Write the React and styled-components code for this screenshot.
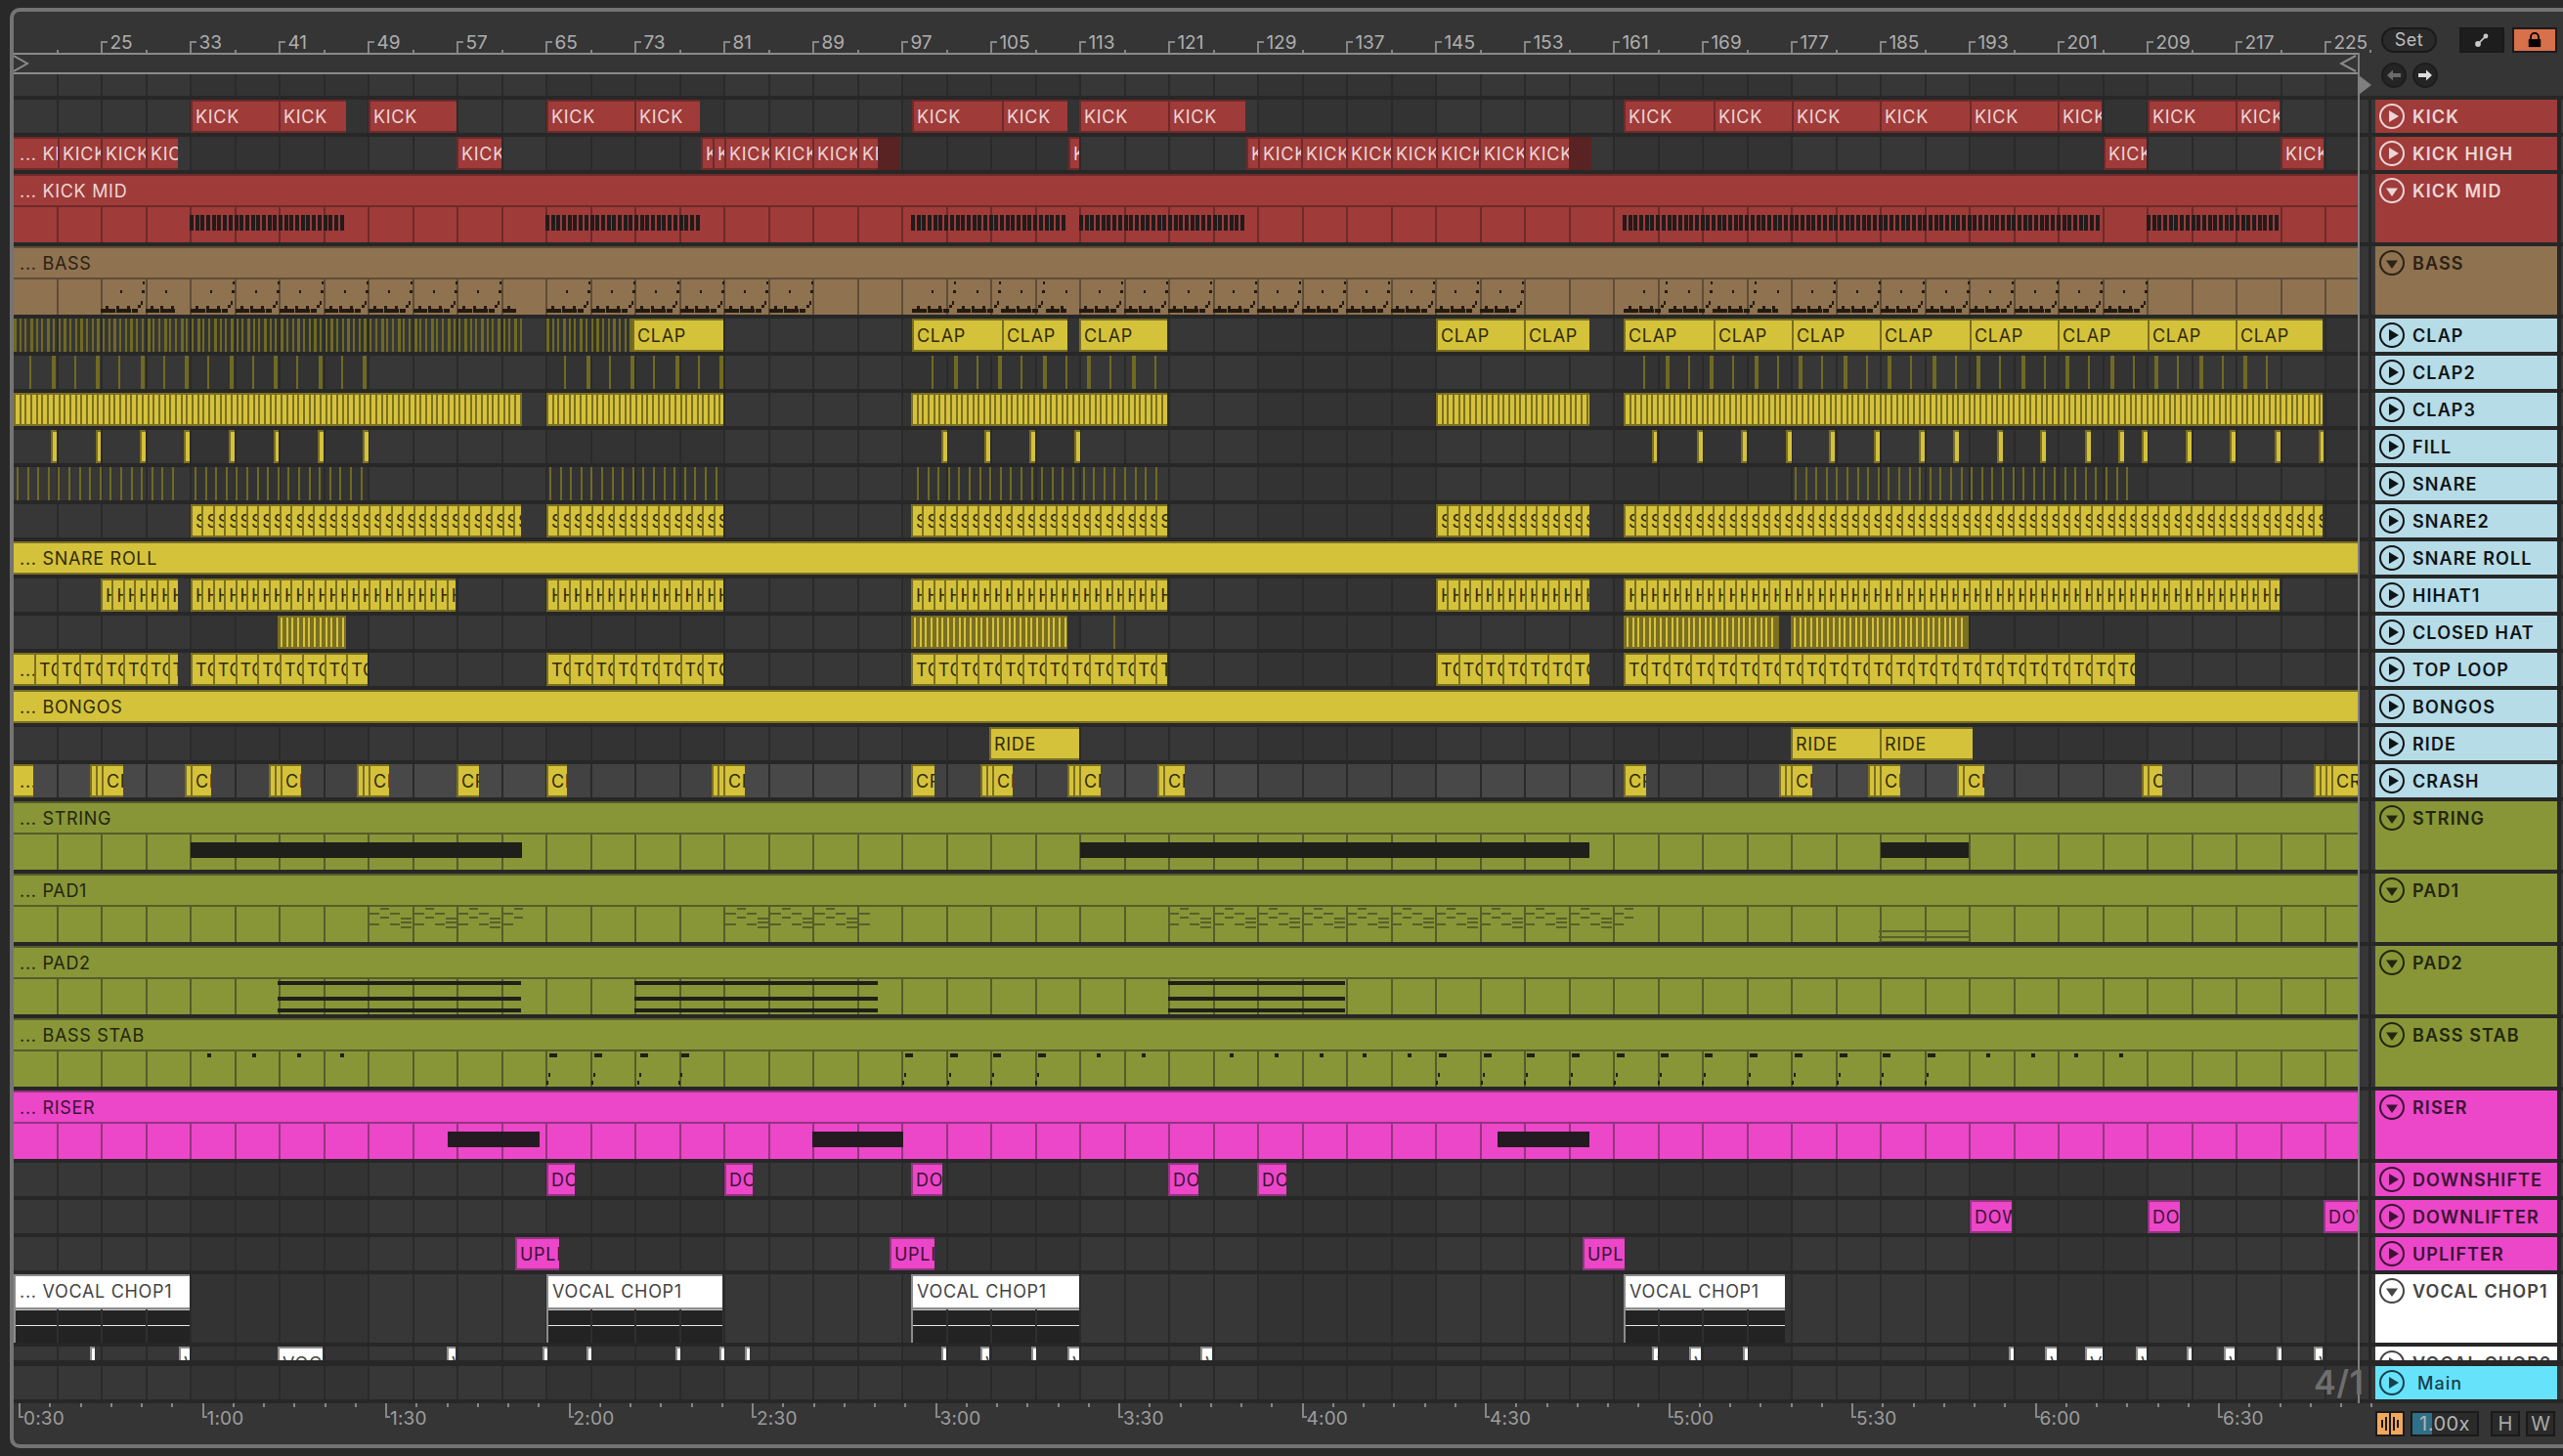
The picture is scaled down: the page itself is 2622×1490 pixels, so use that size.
import React from "react";
import styled, { createGlobalStyle } from "styled-components";

const TONES = {
  red: { fill: "#9f3b39", edge: "#6e2a2a", ink: "#ecd6d6" },
  redDim: { fill: "#5a2323", edge: "#5a2323", ink: "#ecd6d6" },
  tan: { fill: "#8f7250", edge: "#5e4d37", ink: "#2b2114" },
  yellow: { fill: "#d5c23b", edge: "#7a6f22", ink: "#302c08" },
  olive: { fill: "#889638", edge: "#565c2a", ink: "#23260f" },
  pink: { fill: "#ec46c9", edge: "#93357f", ink: "#3a1433" },
  white: { fill: "#ffffff", edge: "#8c8c8c", ink: "#444444" },
  sky: { fill: "#b6dce8", edge: "#7da0aa", ink: "#101416" },
  cyan: { fill: "#66e3fb", edge: "#66e3fb", ink: "#17404c" },
  dark: { fill: "#7a6f22", edge: "#7a6f22", ink: "#302c08" },
};

const LANE_X = 14;
const BAR_ZERO = 103.4;
const STEP = 45.5;

const laneGradient = (line) => {
  const offset = (BAR_ZERO - LANE_X) % STEP;
  return `repeating-linear-gradient(90deg, ${line} ${offset - STEP}px, ${line} ${offset - STEP + 2}px, transparent ${
    offset - STEP + 2
  }px, transparent ${offset}px)`;
};

const GlobalStyle = createGlobalStyle`
  html, body {
    margin: 0;
    background: #292929;
    overflow: hidden;
  }
  body {
    font-family: Inter, "Liberation Sans", sans-serif;
  }
`;

const Frame = styled.div`
  position: relative;
  box-sizing: border-box;
  margin: 8px 0 0 10px;
  width: 2612px;
  height: 1474px;
  border: 4px solid #747474;
  border-right: none;
  border-radius: 10px 0 0 10px;
  background: #353535;
  display: flex;
  flex-direction: column;
  overflow: hidden;
`;

const TopArea = styled.div`
  display: flex;
  height: 86px;
  margin-bottom: 4px;
`;

const TimeColumn = styled.div`
  width: 2416px;
  display: flex;
  flex-direction: column;
`;

const Ruler = styled.div`
  position: relative;
  height: 42px;
  flex: none;
`;

const BarTick = styled.span`
  position: absolute;
  bottom: 0;
  width: 7px;
  height: 12px;
  border-left: 2px solid #858585;
  border-top: 2px solid #858585;
  box-sizing: border-box;
`;

const HalfTick = styled.span`
  position: absolute;
  bottom: 0;
  width: 2px;
  height: 3px;
  background: #858585;
`;

const BarLabel = styled.span`
  position: absolute;
  top: 22px;
  font-size: 19px;
  line-height: 20px;
  color: #aeaeae;
`;

const LoopBar = styled.div`
  position: relative;
  box-sizing: border-box;
  flex: none;
  width: 2400px;
  height: 22px;
  border: 2px solid #8a8a8a;
  border-left: none;
`;

const LoopMark = styled.svg`
  position: absolute;
  top: 0;
  ${(p) => (p.$end ? "right: 1px;" : "left: 0;")}
`;

const EmptyLane = styled.div`
  flex: 1;
  width: 2398px;
  background-image: ${laneGradient("#2a2a2a")},
    repeating-linear-gradient(90deg, #373737 -1px, #373737 181px, #333333 181px, #333333 363px);
`;

const SideTools = styled.div`
  position: relative;
  flex: 1;
  padding: 16px 0 0 6px;
  display: flex;
  flex-direction: column;
  gap: 10px;
`;

const ToolRow = styled.div`
  display: flex;
  align-items: center;
`;

const SetPill = styled.div`
  box-sizing: border-box;
  width: 57px;
  height: 26px;
  border-radius: 13px;
  border: 2px solid #1a1a1a;
  background: #2a2a2a;
  color: #bdbdbd;
  font-size: 18px;
  line-height: 22px;
  letter-spacing: 0.6px;
  text-align: center;
`;

const SquareTool = styled.div`
  box-sizing: border-box;
  width: 46px;
  height: 26px;
  margin-left: ${(p) => p.$gap}px;
  border: 2px solid #1a1a1a;
  background: ${(p) => p.$bg};
  display: flex;
  align-items: center;
  justify-content: center;
`;

const RoundTool = styled.div`
  box-sizing: border-box;
  width: 26px;
  height: 26px;
  margin-right: 6px;
  border-radius: 50%;
  background: #242424;
  border: 2px solid #1d1d1d;
  display: flex;
  align-items: center;
  justify-content: center;
`;

const Tracks = styled.div`
  position: relative;
  flex: none;
  background: #272727;
  display: flex;
  flex-direction: column;
  gap: 4px;
  margin-top: -4px;
  padding-top: 4px;
`;

const Row = styled.div`
  position: relative;
  display: flex;
  height: ${(p) => p.$h}px;
  flex: none;
`;

const Lane = styled.div`
  position: relative;
  width: 2398px;
  flex: none;
  display: flex;
  flex-direction: column;
  overflow: hidden;
  background-color: #363636;
  background-image: ${laneGradient("#2a2a2a")},
    repeating-linear-gradient(90deg, ${(p) => (p.$lit ? "#484848" : "#373737")} -1px, ${(p) =>
      p.$lit ? "#484848" : "#373737"} 181px, ${(p) => (p.$lit ? "#424242" : "#333333")} 181px, ${(p) =>
      p.$lit ? "#424242" : "#333333"} 363px);
`;

const Band = styled.div`
  box-sizing: border-box;
  height: 34px;
  flex: none;
  padding-left: 6px;
  border-top: 2px solid ${(p) => TONES[p.$tone].edge};
  border-bottom: 2px solid ${(p) => TONES[p.$tone].edge};
  background: ${(p) => TONES[p.$tone].fill};
  color: ${(p) => TONES[p.$tone].ink};
  font-size: 18px;
  line-height: 31px;
  letter-spacing: 0.7px;
  white-space: nowrap;
`;

const Body = styled.div`
  flex: 1;
  background-color: ${(p) => TONES[p.$tone].fill};
  background-image: ${(p) => laneGradient(TONES[p.$tone].edge)};
`;

const Clip = styled.div`
  position: absolute;
  top: 0;
  bottom: 0;
  box-sizing: border-box;
  overflow: hidden;
  padding-left: ${(p) => (p.$lead ? 6 : 3)}px;
  border-left: ${(p) => (p.$lead ? "none" : `2px solid ${TONES[p.$tone].edge}`)};
  border-top: 2px solid ${(p) => TONES[p.$tone].edge};
  border-bottom: ${(p) => (p.$open ? "none" : `2px solid ${TONES[p.$tone].edge}`)};
  background: ${(p) => TONES[p.$tone].fill};
  color: ${(p) => TONES[p.$tone].ink};
  font-size: 18px;
  line-height: 31px;
  letter-spacing: 0.7px;
  white-space: nowrap;
`;

const VocalClip = styled.div`
  position: absolute;
  top: 0;
  bottom: 0;
  box-sizing: border-box;
  border-left: 2px solid #8c8c8c;
  display: flex;
  flex-direction: column;
`;

const VocalHead = styled.div`
  box-sizing: border-box;
  height: 36px;
  flex: none;
  padding-left: 4px;
  border-top: 2px solid #8c8c8c;
  border-bottom: 2px solid #8c8c8c;
  background: #ffffff;
  color: #444444;
  font-size: 18px;
  line-height: 31px;
  letter-spacing: 0.7px;
  white-space: nowrap;
`;

const VocalWave = styled.div`
  position: relative;
  flex: 1;
  background: #232323;
  &::before {
    content: "";
    position: absolute;
    left: 0;
    right: 0;
    top: 16px;
    height: 1px;
    background: #e8e8e8;
  }
  &::after {
    content: "";
    position: absolute;
    left: 0;
    right: 0;
    top: 0;
    height: 1px;
    background: #c8c8c8;
  }
`;

const Roll = styled.svg`
  position: absolute;
  left: 0;
  top: 0;
  pointer-events: none;
`;

const Gutter = styled.div`
  width: 18px;
  flex: none;
  background: linear-gradient(90deg, #363636 11px, #272727 11px, #272727 14px, #363636 14px);
`;

const TrackHead = styled.div`
  box-sizing: border-box;
  width: 186px;
  flex: none;
  display: flex;
  align-items: flex-start;
  gap: ${(p) => (p.$main ? 13 : 8)}px;
  padding: 4px 0 0 4px;
  overflow: hidden;
  background: ${(p) => TONES[p.$tone].fill};
  color: ${(p) => TONES[p.$tone].ink};
`;

const TrackName = styled.span`
  font-size: 18px;
  line-height: 27px;
  font-weight: ${(p) => (p.$main ? 500 : 600)};
  letter-spacing: ${(p) => (p.$main ? 1 : 1.1)}px;
  white-space: nowrap;
`;

const RightEdge = styled.div`
  width: 2px;
  margin-left: 4px;
  flex: none;
  background: #3a3a3a;
`;

const EndLine = styled.div`
  position: absolute;
  left: 2398px;
  top: 42px;
  width: 2px;
  height: 1382px;
  background: #7f7f7f;
  z-index: 3;
`;

const EndFlag = styled.svg`
  position: absolute;
  left: 2399px;
  top: 65px;
  z-index: 3;
`;

const GridLabel = styled.span`
  position: absolute;
  left: 2353px;
  top: 0;
  font-size: 34px;
  line-height: 34px;
  font-weight: 600;
  letter-spacing: 0.5px;
  color: #6e6e6e;
  z-index: 4;
`;

const MainRowSpacer = styled.div`
  height: 6px;
  flex: none;
  background: #272727;
`;

const MainRowFoot = styled.div`
  height: 4px;
  flex: none;
  background: #272727;
`;

const BottomBar = styled.div`
  display: flex;
  flex: 1;
`;

const TimeRuler = styled.div`
  position: relative;
  width: 2416px;
  flex: none;
`;

const MinorTick = styled.span`
  position: absolute;
  top: 0;
  width: 2px;
  height: 4px;
  background: #868686;
`;

const MajorTick = styled.span`
  position: absolute;
  top: 0;
  width: 5px;
  height: 15px;
  box-sizing: border-box;
  border-left: 2px solid #868686;
  border-bottom: 2px solid #868686;
`;

const TimeLabel = styled.span`
  position: absolute;
  top: 6px;
  font-size: 19px;
  line-height: 20px;
  letter-spacing: 0.2px;
  color: #9d9d9d;
`;

const BottomTools = styled.div`
  flex: 1;
  display: flex;
  align-items: flex-start;
  padding-top: 8px;
`;

const WaveButton = styled.div`
  box-sizing: border-box;
  width: 30px;
  height: 26px;
  border: 2px solid #1a1a1a;
  background: #f2a85c;
  display: flex;
  align-items: center;
  justify-content: center;
`;

const ZoomField = styled.div`
  position: relative;
  box-sizing: border-box;
  width: 70px;
  height: 26px;
  margin-left: 6px;
  border: 2px solid #1a1a1a;
  background: #2a2a2a;
  color: #b4b4b4;
  font-size: 20px;
  line-height: 22px;
  letter-spacing: 0.5px;
  padding-left: 7px;
  white-space: nowrap;
  &::before {
    content: "";
    position: absolute;
    left: 0;
    top: 0;
    bottom: 0;
    width: 20px;
    background: #2f6f87;
  }
`;

const ZoomText = styled.span`
  position: relative;
`;

const KeyButton = styled.div`
  box-sizing: border-box;
  width: 30px;
  height: 26px;
  margin-left: ${(p) => p.$gap}px;
  border: 2px solid #1a1a1a;
  background: #2a2a2a;
  color: #a8a8a8;
  font-size: 20px;
  line-height: 22px;
  text-align: center;
`;

// builders for the clip and note data
const clip = (a, b, label, tone) => ({ a, b, label, tone });

const chain = (edges, label) =>
  edges.slice(0, -1).map((a, i) => clip(a, edges[i + 1], label));

const cells = (ranges, pitch, label) => {
  const out = [];
  ranges.forEach(([a, b]) => {
    for (let x = a; x < b - 1; x += pitch) out.push(clip(x, Math.min(x + pitch, b), label));
  });
  return out;
};

const crash = (a, b, slices) => {
  const out = [];
  for (let i = 0; i < slices; i++) out.push(clip(a + i * 6, a + (i + 1) * 6));
  out.push(clip(a + slices * 6, b, "CRASH"));
  return out;
};

const stripes = (ranges, pitch, width, y, h) => {
  const out = [];
  ranges.forEach(([a, b]) => {
    let i = 0;
    for (let x = a; x < b - 1; x += pitch) {
      out.push([x, y, typeof width === "function" ? width(i) : width, h]);
      i++;
    }
  });
  return out;
};

const solid = (ranges, ys, h) =>
  ranges.flatMap(([a, b]) => ys.map((y) => [a, y, b - a, h]));

// bar lines that show through the dark body of a vocal clip
const barLines = (ranges, y, h) => {
  const out = [];
  ranges.forEach(([a, b]) => {
    for (let x = BAR_ZERO - 2 * STEP; x < b - 2; x += STEP) {
      if (x > a + 4) out.push([x, y, 2, h]);
    }
  });
  return out;
};

const BASS_RANGES = [
  [103, 184],
  [195, 533],
  [559, 831],
  [933, 1092],
  [1104, 1559],
  [1661, 1820],
  [1833, 2196],
];

const bassNotes = () => {
  const out = [];
  BASS_RANGES.forEach(([a, b]) => {
    for (let x = a; x < b - 8; x += STEP) {
      const room = b - x;
      if (room > 22) out.push([x + 20, 45, 2, 3]);
      if (room > 44) {
        out.push([x + 43, 36, 2, 3], [x + 42, 45, 3, 3], [x + 38, 60, 3, 3], [x + 41, 56, 2, 4]);
      }
      for (let i = 0; i < 7 && i * 5.3 < room - 4; i++) {
        out.push([x + i * 5.3, 64, i % 3 === 2 ? 4 : 6, 4]);
        if (i % 2) out.push([x + i * 5.3, 61, 3, 3]);
      }
    }
  });
  return out;
};

const PAD_DASHES = [
  [12, 35, 9],
  [0, 40, 11],
  [22, 40, 10],
  [12, 44, 9],
  [33, 45, 11],
  [33, 49, 11],
  [0, 51, 11],
  [22, 51, 10],
  [33, 54, 11],
];

const padNotes = () => {
  const out = [];
  [
    [377, 534],
    [742, 898],
    [1195, 1672],
  ].forEach(([a, b]) => {
    for (let x = a; x < b; x += STEP) {
      PAD_DASHES.forEach(([dx, y, w]) => {
        if (x + dx + w < b + 1) out.push([x + dx, y, w, 2]);
      });
    }
  });
  [58, 64, 69].forEach((y) => out.push([1922, y, 92, 2]));
  return out;
};

const stabNotes = () => {
  const small = [214, 260, 306, 350, 1124, 1170, 1260, 1306, 1352, 1396, 1442, 2034, 2080, 2124, 2170];
  const wide = [566, 612, 659, 701, 930, 976, 1020, 1066, 1476, 1522, 1566, 1612, 1658, 1703, 1748, 1794, 1840, 1886, 1930, 1976];
  const out = small.map((x) => [x - 2, 36, 4, 4]);
  wide.forEach((x) => {
    out.push([x - 4, 36, 8, 4], [x - 5, 56, 2, 4], [x - 7, 64, 2, 4]);
  });
  return out;
};

const DARK = "#211b1b";
const OLIVE_LINE = "#6f6a22";

const CLAP_CHAIN = [
  ...chain([647, 740], "CLAP"),
  ...chain([933, 1025, 1092], "CLAP"),
  clip(1104, 1194, "CLAP"),
  ...chain([1469, 1559, 1626], "CLAP"),
  ...chain([1661, 1753, 1833, 1923, 2015, 2105, 2197, 2287, 2376], "CLAP"),
];

const VOCAL_CLIPS = [
  { a: 14, b: 194, label: "... VOCAL CHOP1" },
  { a: 559, b: 739, label: "VOCAL CHOP1" },
  { a: 932, b: 1104, label: "VOCAL CHOP1" },
  { a: 1661, b: 1826, label: "VOCAL CHOP1" },
];

const TRACKS = [
  {
    name: "KICK",
    tone: "red",
    h: 34,
    clips: [
      ...chain([195, 285, 354], "KICK"),
      clip(377, 467, "KICK"),
      ...chain([559, 649, 716], "KICK"),
      ...chain([933, 1025, 1092], "KICK"),
      ...chain([1104, 1195, 1274], "KICK"),
      ...chain([1661, 1753, 1833, 1923, 2015, 2105, 2150], "KICK"),
      ...chain([2197, 2287, 2332], "KICK"),
    ],
  },
  {
    name: "KICK HIGH",
    tone: "red",
    h: 34,
    clips: [
      clip(14, 59, "... KICK"),
      ...chain([59, 103, 149, 182], "KICK"),
      clip(467, 513, "KICK"),
      ...chain([717, 729, 741, 787, 831, 877, 898], "KICK"),
      clip(898, 921, "", "redDim"),
      clip(1093, 1104, "KICK"),
      ...chain([1275, 1287, 1331, 1377, 1423, 1469, 1513, 1559, 1605], "KICK"),
      clip(1605, 1628, "", "redDim"),
      clip(2152, 2196, "KICK"),
      clip(2333, 2377, "KICK"),
    ],
  },
  {
    name: "KICK MID",
    tone: "red",
    h: 70,
    band: "... KICK MID",
    open: true,
    rolls: [
      {
        fill: DARK,
        rects: stripes(
          [
            [194, 352],
            [558, 716],
            [932, 1092],
            [1104, 1274],
            [1660, 2149],
            [2196, 2331],
          ],
          5.69,
          4,
          42,
          16
        ),
      },
    ],
  },
  {
    name: "BASS",
    tone: "tan",
    h: 70,
    band: "... BASS",
    open: true,
    rolls: [{ fill: "#241a10", rects: bassNotes() }],
  },
  {
    name: "CLAP",
    tone: "yellow",
    head: "sky",
    h: 34,
    clips: CLAP_CHAIN,
    rolls: [
      {
        fill: OLIVE_LINE,
        rects: stripes(
          [
            [14, 533],
            [559, 647],
          ],
          5.69,
          (i) => (i % 3 === 0 ? 3 : 2),
          0,
          34
        ),
      },
    ],
  },
  {
    name: "CLAP2",
    tone: "yellow",
    head: "sky",
    h: 34,
    rolls: [
      {
        fill: OLIVE_LINE,
        rects: stripes(
          [
            [30, 376],
            [577, 740],
            [953, 1194],
            [1681, 2320],
          ],
          22.75,
          (i) => (i % 2 ? 4 : 2),
          0,
          34
        ),
      },
    ],
  },
  {
    name: "CLAP3",
    tone: "yellow",
    head: "sky",
    h: 34,
    clips: [clip(14, 533), clip(559, 740), clip(932, 1194), clip(1469, 1626), clip(1661, 2376)],
    rolls: [
      {
        fill: "#7a6f22",
        rects: stripes(
          [
            [14, 533],
            [559, 740],
            [932, 1194],
            [1469, 1626],
            [1661, 2376],
          ],
          5.69,
          2,
          0,
          34
        ),
      },
    ],
  },
  {
    name: "FILL",
    tone: "yellow",
    head: "sky",
    h: 34,
    clips: [
      ...[
        [52, 6],
        [98, 4],
        [143, 6],
        [188, 6],
        [234, 6],
        [280, 4],
        [325, 6],
        [371, 6],
        [963, 6],
        [1007, 6],
        [1053, 6],
        [1099, 6],
        [1690, 4],
        [1736, 6],
        [1781, 6],
        [1827, 6],
        [1871, 6],
        [1917, 6],
        [1963, 6],
        [1998, 6],
        [2043, 6],
        [2087, 6],
        [2133, 6],
        [2167, 6],
        [2191, 6],
        [2236, 6],
        [2281, 6],
        [2327, 6],
        [2372, 5],
      ].map(([x, w]) => clip(x, x + w)),
    ],
  },
  {
    name: "SNARE",
    tone: "yellow",
    head: "sky",
    h: 34,
    rolls: [
      {
        fill: OLIVE_LINE,
        rects: stripes(
          [
            [17, 178],
            [199, 373],
            [562, 736],
            [938, 1192],
            [1836, 2180],
          ],
          10.6,
          2,
          0,
          34
        ),
      },
    ],
  },
  {
    name: "SNARE2",
    tone: "yellow",
    head: "sky",
    h: 34,
    clips: cells(
      [
        [195, 533],
        [559, 740],
        [932, 1194],
        [1469, 1626],
        [1661, 2376],
      ],
      11.375,
      "SNARE2"
    ),
  },
  { name: "SNARE ROLL", tone: "yellow", head: "sky", h: 34, band: "... SNARE ROLL" },
  {
    name: "HIHAT1",
    tone: "yellow",
    head: "sky",
    h: 34,
    clips: cells(
      [
        [103, 182],
        [195, 466],
        [559, 740],
        [932, 1194],
        [1469, 1626],
        [1661, 2332],
      ],
      11.375,
      "HIHAT1"
    ),
  },
  {
    name: "CLOSED HAT",
    tone: "yellow",
    head: "sky",
    h: 34,
    clips: [
      clip(284, 354, "", "dark"),
      clip(932, 1092, "", "dark"),
      clip(1661, 1820, "", "dark"),
      clip(1832, 2014, "", "dark"),
    ],
    rolls: [
      {
        fill: "#d5c23b",
        rects: stripes(
          [
            [287, 352],
            [935, 1090],
            [1664, 1818],
            [1835, 2012],
          ],
          5.69,
          2,
          2,
          30
        ),
      },
      { fill: OLIVE_LINE, rects: [[1139, 0, 2, 34]] },
    ],
  },
  {
    name: "TOP LOOP",
    tone: "yellow",
    head: "sky",
    h: 34,
    clips: [
      clip(14, 35, "..."),
      ...cells(
        [
          [35, 182],
          [195, 376],
          [559, 740],
          [932, 1194],
          [1469, 1626],
          [1661, 2184],
        ],
        22.75,
        "TOP LOOP"
      ),
    ],
  },
  { name: "BONGOS", tone: "yellow", head: "sky", h: 34, band: "... BONGOS" },
  {
    name: "RIDE",
    tone: "yellow",
    head: "sky",
    h: 34,
    clips: [clip(1012, 1104, "RIDE"), clip(1832, 1923, "RIDE"), clip(1923, 2018, "RIDE")],
  },
  {
    name: "CRASH",
    tone: "yellow",
    head: "sky",
    h: 34,
    lit: true,
    clips: [
      clip(14, 34, "..."),
      ...crash(92, 126, 2),
      ...crash(189, 216, 1),
      ...crash(275, 308, 2),
      ...crash(365, 398, 2),
      ...crash(467, 490, 0),
      ...crash(559, 580, 0),
      ...crash(728, 762, 2),
      ...crash(932, 956, 0),
      ...crash(1003, 1036, 2),
      ...crash(1092, 1126, 2),
      ...crash(1184, 1212, 1),
      ...crash(1661, 1684, 0),
      ...crash(1820, 1854, 2),
      ...crash(1911, 1944, 2),
      ...crash(2002, 2030, 1),
      ...crash(2191, 2212, 1),
      ...crash(2367, 2412, 3),
    ],
  },
  {
    name: "STRING",
    tone: "olive",
    h: 70,
    band: "... STRING",
    open: true,
    rolls: [
      {
        fill: "#1f201a",
        rects: solid(
          [
            [195, 534],
            [1105, 1626],
            [1924, 2014],
          ],
          [42],
          16
        ),
      },
    ],
  },
  {
    name: "PAD1",
    tone: "olive",
    h: 70,
    band: "... PAD1",
    open: true,
    rolls: [{ fill: "#5a5f29", rects: padNotes() }],
  },
  {
    name: "PAD2",
    tone: "olive",
    h: 70,
    band: "... PAD2",
    open: true,
    rolls: [
      {
        fill: "#1f201a",
        rects: solid(
          [
            [284, 533],
            [649, 898],
            [1195, 1376],
          ],
          [36, 52, 64],
          4
        ),
      },
    ],
  },
  {
    name: "BASS STAB",
    tone: "olive",
    h: 70,
    band: "... BASS STAB",
    open: true,
    rolls: [{ fill: "#1f201a", rects: stabNotes() }],
  },
  {
    name: "RISER",
    tone: "pink",
    h: 70,
    band: "... RISER",
    open: true,
    rolls: [
      {
        fill: "#241a22",
        rects: solid(
          [
            [458, 552],
            [831, 924],
            [1532, 1626],
          ],
          [42],
          16
        ),
      },
    ],
  },
  {
    name: "DOWNSHIFTE",
    tone: "pink",
    h: 34,
    clips: [
      clip(559, 588, "DOWNSHIFTER"),
      clip(741, 770, "DOWNSHIFTER"),
      clip(932, 964, "DOWNSHIFTER"),
      clip(1195, 1226, "DOWNSHIFTER"),
      clip(1286, 1316, "DOWNSHIFTER"),
    ],
  },
  {
    name: "DOWNLIFTER",
    tone: "pink",
    h: 34,
    clips: [clip(2015, 2058, "DOWNLIFTER"), clip(2197, 2230, "DOWNLIFTER"), clip(2377, 2412, "DOWNLIFTER")],
  },
  {
    name: "UPLIFTER",
    tone: "pink",
    h: 34,
    clips: [clip(527, 572, "UPLIFTER"), clip(910, 956, "UPLIFTER"), clip(1619, 1662, "UPLIFTER")],
  },
  {
    name: "VOCAL CHOP1",
    tone: "white",
    h: 70,
    open: true,
    vocals: VOCAL_CLIPS,
    rolls: [
      {
        fill: "#2f2f2f",
        rects: barLines(
          VOCAL_CLIPS.map((c) => [c.a, c.b]),
          36,
          34
        ),
      },
    ],
  },
  {
    name: "VOCAL CHOP2",
    tone: "white",
    h: 14,
    open: false,
    cut: true,
    clips: [
      [92, 96],
      [183, 194],
      [284, 330],
      [457, 466],
      [555, 558],
      [600, 604],
      [691, 694],
      [736, 740],
      [762, 766],
      [963, 968],
      [1003, 1012],
      [1055, 1058],
      [1092, 1104],
      [1228, 1240],
      [1690, 1696],
      [1728, 1740],
      [1783, 1786],
      [2055, 2060],
      [2092, 2104],
      [2133, 2151],
      [2185, 2196],
      [2237, 2242],
      [2275, 2286],
      [2329, 2332],
      [2367, 2376],
    ].map(([a, b]) => clip(a, b, "VOCAL CHOP2")),
  },
];

const laneStyle = (a, b) => ({ left: a - LANE_X, width: b - a });

const FoldIcon = ({ open, color }) => (
  <svg width="26" height="26" viewBox="0 0 26 26" style={{ flex: "none" }}>
    <circle cx="13" cy="13" r="12" fill="none" stroke={color} strokeWidth="2" />
    {open ? <polygon points="7,10.5 19,10.5 13,19" fill={color} /> : <polygon points="10,7 20,13 10,19" fill={color} />}
  </svg>
);

const Track = ({ track }) => {
  const head = track.head || track.tone;
  return (
    <Row $h={track.h}>
      <Lane $lit={track.lit}>
        {track.band && (
          <>
            <Band $tone={track.tone}>{track.band}</Band>
            <Body $tone={track.tone} />
          </>
        )}
        {(track.clips || []).map((c, i) => (
          <Clip
            key={i}
            $tone={c.tone || track.tone}
            $open={track.cut}
            $lead={c.a === LANE_X && c.label}
            style={laneStyle(c.a, c.b)}
          >
            {c.label}
          </Clip>
        ))}
        {(track.vocals || []).map((c, i) => (
          <VocalClip key={i} style={laneStyle(c.a, c.b)}>
            <VocalHead>{c.label}</VocalHead>
            <VocalWave />
          </VocalClip>
        ))}
        {(track.rolls || []).map((roll, i) => (
          <Roll key={i} width="2398" height={track.h} shapeRendering="crispEdges">
            {roll.rects.map(([x, y, w, h], j) => (
              <rect key={j} x={x - LANE_X} y={y} width={w} height={h} fill={roll.fill} />
            ))}
          </Roll>
        ))}
      </Lane>
      <Gutter />
      <TrackHead $tone={head}>
        <FoldIcon open={track.open} color={TONES[head].ink} />
        <TrackName>{track.name}</TrackName>
      </TrackHead>
      <RightEdge />
    </Row>
  );
};

const BARS = Array.from({ length: 26 }, (_, i) => 25 + i * 8);
const TIMES = ["0:30", "1:00", "1:30", "2:00", "2:30", "3:00", "3:30", "4:00", "4:30", "5:00", "5:30", "6:00", "6:30"];

const App = () => (
  <>
    <GlobalStyle />
    <Frame>
      <TopArea>
        <TimeColumn>
          <Ruler>
            {BARS.map((bar, i) => {
              const x = BAR_ZERO + i * 91 - LANE_X;
              return (
                <React.Fragment key={bar}>
                  <BarTick style={{ left: x }} />
                  <BarLabel style={{ left: x + 9 }}>{bar}</BarLabel>
                  <HalfTick style={{ left: x - STEP }} />
                </React.Fragment>
              );
            })}
            <HalfTick style={{ left: BAR_ZERO + 25 * 91 - LANE_X + STEP }} />
          </Ruler>
          <LoopBar>
            <LoopMark width="16" height="18" viewBox="0 0 16 18">
              <polyline points="0,1 14,9 0,17" fill="none" stroke="#8a8a8a" strokeWidth="2" />
            </LoopMark>
            <LoopMark $end width="18" height="18" viewBox="0 0 18 18">
              <polyline points="17,1 2,9 17,17" fill="none" stroke="#8a8a8a" strokeWidth="2" />
            </LoopMark>
          </LoopBar>
          <EmptyLane />
        </TimeColumn>
        <SideTools>
          <ToolRow>
            <SetPill>Set</SetPill>
            <SquareTool $gap={23} $bg="#1d1d1d">
              <svg width="16" height="16" viewBox="0 0 20 20">
                <line x1="5" y1="15" x2="15" y2="5" stroke="#c8c8c8" strokeWidth="2" />
                <circle cx="5" cy="15" r="3.6" fill="#c8c8c8" />
                <circle cx="15" cy="5" r="3" fill="#c8c8c8" />
              </svg>
            </SquareTool>
            <SquareTool $gap={8} $bg="#d8704b">
              <svg width="16" height="16" viewBox="0 0 18 18">
                <path d="M4.5 8 V5.5 a4.5 4.5 0 0 1 9 0 V8" fill="none" stroke="#000" strokeWidth="2" />
                <rect x="2" y="8" width="14" height="9" fill="#000" />
              </svg>
            </SquareTool>
          </ToolRow>
          <ToolRow>
            <RoundTool>
              <svg width="16" height="16" viewBox="0 0 16 16">
                <path d="M1 8 L7 2.5 V6 H15 V10 H7 V13.5 Z" fill="#6a6a6a" />
              </svg>
            </RoundTool>
            <RoundTool>
              <svg width="16" height="16" viewBox="0 0 16 16">
                <path d="M15 8 L9 2.5 V6 H1 V10 H9 V13.5 Z" fill="#dcdcdc" />
              </svg>
            </RoundTool>
          </ToolRow>
        </SideTools>
      </TopArea>
      <Tracks>
        {TRACKS.map((track) => (
          <Track key={track.name} track={track} />
        ))}
      </Tracks>
      <MainRowSpacer />
      <Row $h={34}>
        <Lane />
        <Gutter />
        <TrackHead $tone="cyan" $main>
          <FoldIcon color={TONES.cyan.ink} />
          <TrackName $main>Main</TrackName>
        </TrackHead>
        <RightEdge />
        <GridLabel>4/1</GridLabel>
      </Row>
      <MainRowFoot />
      <BottomBar>
        <TimeRuler>
          {TIMES.map((time, i) => {
            const x = 5 + i * 187.5;
            return (
              <React.Fragment key={time}>
                <MajorTick style={{ left: x }} />
                <TimeLabel style={{ left: x + 5 }}>{time}</TimeLabel>
                {[1, 2, 3, 4, 5].map((k) => (
                  <MinorTick key={k} style={{ left: x + k * 31.25 }} />
                ))}
              </React.Fragment>
            );
          })}
        </TimeRuler>
        <BottomTools>
          <WaveButton>
            <svg width="20" height="22" viewBox="0 0 20 22">
              {[
                [2, 7],
                [6, 4],
                [10, 0],
                [14, 4],
                [18, 7],
              ].map(([x, top]) => (
                <rect key={x} x={x - 1} y={top} width="2" height={22 - top * 2} fill="#1a1a1a" />
              ))}
            </svg>
          </WaveButton>
          <ZoomField>
            <ZoomText>1.00x</ZoomText>
          </ZoomField>
          <KeyButton $gap={12}>H</KeyButton>
          <KeyButton $gap={6}>W</KeyButton>
        </BottomTools>
      </BottomBar>
      <EndLine />
      <EndFlag width="13" height="20" viewBox="0 0 13 20">
        <polygon points="0,0 13,10 0,20" fill="#7f7f7f" />
      </EndFlag>
    </Frame>
  </>
);

export default App;
